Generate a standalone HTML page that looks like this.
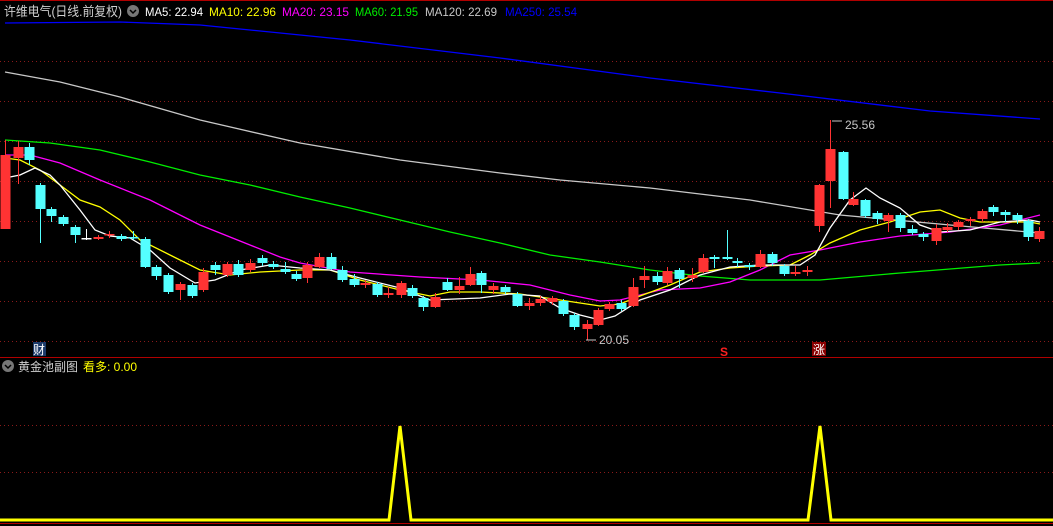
<!DOCTYPE html>
<html><head><meta charset="utf-8"><style>
html,body{margin:0;padding:0;background:#000;width:1053px;height:526px;overflow:hidden}
svg{display:block}
text{font-family:"Liberation Sans","Noto Sans CJK SC",sans-serif}
</style></head><body>
<svg width="1053" height="526" viewBox="0 0 1053 526" xmlns="http://www.w3.org/2000/svg">
<rect width="1053" height="526" fill="#000"/>
<line x1="0" y1="0.5" x2="1053" y2="0.5" stroke="#b00000"/>
<g stroke="#8a1a1a" stroke-dasharray="1,3">
<line x1="0" y1="61.5" x2="1053" y2="61.5"/><line x1="0" y1="101.5" x2="1053" y2="101.5"/>
<line x1="0" y1="141.5" x2="1053" y2="141.5"/><line x1="0" y1="181.5" x2="1053" y2="181.5"/>
<line x1="0" y1="221.5" x2="1053" y2="221.5"/><line x1="0" y1="261.5" x2="1053" y2="261.5"/>
<line x1="0" y1="301.5" x2="1053" y2="301.5"/><line x1="0" y1="341.5" x2="1053" y2="341.5"/>
<line x1="0" y1="425.5" x2="1053" y2="425.5"/><line x1="0" y1="472.5" x2="1053" y2="472.5"/>
</g>
<line x1="0" y1="357.5" x2="1053" y2="357.5" stroke="#b00000"/>
<line x1="0" y1="523.5" x2="1053" y2="523.5" stroke="#b00000"/>
<g fill="none" stroke-width="1.3">
<polyline stroke="#0000ff" points="5,23 120,22 200,25 350,40 500,58 650,78 780,93 930,111 1040,119"/>
<polyline stroke="#c8c8c8" points="5,72 60,82 120,97 200,120 300,143 400,160 500,173 560,180 650,188 750,200 840,215 950,225 1040,233"/>
<polyline stroke="#00ee00" points="5,140 50,143 100,150 150,162 200,175 250,185 300,197 350,208 400,220 450,232 500,243 550,255 600,262 650,270 700,276 750,280 820,280 900,273 1000,265 1040,263"/>
<polyline stroke="#ff00ff" points="5,155 30,155 60,163 100,180 150,200 200,225 250,245 280,257 300,263 350,272 420,277 480,280 530,285 570,295 600,301 620,300 660,290 700,288 730,282 760,270 790,255 820,250 860,242 900,236 950,232 1000,225 1040,215"/>
<polyline stroke="#ffff00" points="5,158 20,160 40,170 60,185 80,200 100,207 120,220 140,240 170,255 200,270 230,275 260,272 300,270 330,270 360,280 400,290 430,296 450,292 480,292 520,294 560,300 600,306 620,304 640,296 670,285 700,272 730,268 760,266 790,265 810,255 830,243 860,230 890,222 920,212 940,210 960,218 980,222 1000,222 1030,222 1040,224"/>
<polyline stroke="#ffffff" points="5,178 20,175 35,168 50,175 60,185 80,210 95,230 110,236 130,238 150,250 170,268 195,283 215,280 240,270 270,265 300,268 330,270 360,278 400,288 430,300 480,298 510,294 540,296 560,308 580,315 600,320 615,316 640,300 670,290 700,275 730,267 760,265 800,265 815,255 830,228 850,200 866,188 880,198 900,208 920,225 940,232 970,230 1000,222 1030,220 1040,222"/>
</g>
<g id="c"></g>
<text x="4" y="16" fill="#d0d0d0" font-size="13" textLength="118" lengthAdjust="spacingAndGlyphs">许维电气(日线.前复权)</text>
<circle cx="133" cy="11" r="6" fill="#777"/><path d="M130,10 l3,3 l3,-3" stroke="#000" stroke-width="1.5" fill="none"/>
<g font-size="12">
<text x="145" y="16" fill="#fff" textLength="58" lengthAdjust="spacingAndGlyphs">MA5: 22.94</text>
<text x="209" y="16" fill="#ffff00" textLength="67" lengthAdjust="spacingAndGlyphs">MA10: 22.96</text>
<text x="282" y="16" fill="#ff00ff" textLength="67" lengthAdjust="spacingAndGlyphs">MA20: 23.15</text>
<text x="355" y="16" fill="#00ee00" textLength="63" lengthAdjust="spacingAndGlyphs">MA60: 21.95</text>
<text x="425" y="16" fill="#c8c8c8" textLength="72" lengthAdjust="spacingAndGlyphs">MA120: 22.69</text>
<text x="505" y="16" fill="#0000ff" textLength="72" lengthAdjust="spacingAndGlyphs">MA250: 25.54</text>
</g>
<rect x="33" y="342" width="13" height="14" fill="#1c3a6a"/>
<text x="33" y="354" fill="#fff" font-size="12">财</text>
<text x="720" y="356" fill="#ff2020" font-size="12" font-weight="bold">S</text>
<rect x="812" y="342" width="14" height="14" fill="#8a0000"/>
<text x="813" y="354" fill="#fff" font-size="12">涨</text>
<text x="845" y="129" fill="#c8c8c8" font-size="12">25.56</text>
<path d="M832,121 h10" stroke="#c8c8c8"/>
<text x="599" y="344" fill="#c8c8c8" font-size="12">20.05</text>
<path d="M586,340 h10" stroke="#c8c8c8"/>
<circle cx="8" cy="366" r="6" fill="#777"/><path d="M5,365 l3,3 l3,-3" stroke="#000" stroke-width="1.5" fill="none"/>
<text x="18" y="371" fill="#d0d0d0" font-size="12">黄金池副图</text>
<text x="83" y="371" fill="#ffff00" font-size="12">看多: 0.00</text>
<polyline fill="none" stroke="#ffff00" stroke-width="3" points="0,520 389,520 400,426 411,520 808,520 820,426 831,520 1053,520"/>
</svg>
<script>
var C=[[5,155,229,140,229,'r'],[18,147,158,141,184,'r'],[29,147,160,143,165,'c'],[40,185,209,183,243,'c'],[51,209,216,207,222,'c'],[63,217,224,215,226,'c'],[75,227,235,225,243,'c'],[86,238,239,229,240,'w'],[98,237,239,235,240,'r'],[109,234,235,231,238,'r'],[121,236,239,234,241,'c'],[133,237,238,231,240,'c'],[145,239,267,237,268,'c'],[156,267,276,265,280,'c'],[168,275,292,273,294,'c'],[180,284,290,282,300,'r'],[192,285,296,283,298,'c'],[203,272,290,268,292,'r'],[215,265,270,262,275,'c'],[227,264,275,262,277,'r'],[238,264,275,260,277,'c'],[250,263,270,259,272,'r'],[262,258,263,255,266,'c'],[273,264,267,261,269,'c'],[285,269,272,262,274,'c'],[296,274,279,271,281,'c'],[307,265,278,262,283,'r'],[319,257,267,253,268,'r'],[331,257,269,253,270,'c'],[342,270,280,266,282,'c'],[354,279,285,274,287,'c'],[365,283,285,280,288,'r'],[377,284,295,282,297,'c'],[388,293,295,287,298,'r'],[401,283,295,281,298,'r'],[412,288,296,285,298,'c'],[423,298,307,296,311,'c'],[435,297,307,293,308,'r'],[447,282,290,278,291,'c'],[459,286,290,277,294,'r'],[470,274,285,267,286,'r'],[481,273,285,271,293,'c'],[493,286,290,283,294,'r'],[505,287,292,285,294,'c'],[517,294,306,292,307,'c'],[529,303,306,298,310,'r'],[540,299,303,296,306,'r'],[552,298,302,296,305,'r'],[563,301,314,299,316,'c'],[574,315,327,313,330,'c'],[587,324,329,320,340,'r'],[598,310,325,308,326,'r'],[609,304,309,302,311,'r'],[621,303,309,300,311,'c'],[633,287,306,278,307,'r'],[644,276,280,266,288,'r'],[657,276,282,272,285,'c'],[667,271,283,267,285,'r'],[679,270,279,268,288,'c'],[692,275,278,268,282,'r'],[703,258,272,254,273,'r'],[714,257,259,255,268,'c'],[727,257,259,230,260,'c'],[737,261,263,258,267,'c'],[749,265,267,263,270,'c'],[760,254,267,250,268,'r'],[772,254,263,252,266,'c'],[784,266,274,264,276,'c'],[795,272,274,266,276,'r'],[807,270,272,266,276,'r'],[819,185,226,184,232,'r'],[830,149,181,120,208,'r'],[843,152,199,151,200,'c'],[853,199,205,192,206,'r'],[865,200,216,199,218,'c'],[877,213,219,211,224,'c'],[888,215,221,213,232,'r'],[900,215,228,213,232,'c'],[912,229,233,225,235,'c'],[923,234,237,232,241,'c'],[936,228,241,224,245,'r'],[947,227,230,223,232,'r'],[958,222,227,220,230,'r'],[970,219,221,217,226,'r'],[982,211,219,209,222,'r'],[993,207,212,205,216,'c'],[1005,212,215,210,222,'c'],[1017,215,220,213,224,'c'],[1028,221,237,219,241,'c'],[1039,231,239,227,242,'r']];
var g=document.getElementById('c'),s='';
C.forEach(function(a){var col=a[5]=='r'?'#ff3333':(a[5]=='c'?'#54ffff':'#ffffff');
s+='<line x1="'+a[0]+'.5" x2="'+a[0]+'.5" y1="'+a[3]+'" y2="'+a[4]+'" stroke="'+col+'"/>';
var h=Math.max(a[2]-a[1],1.5);s+='<rect x="'+(a[0]-4.5)+'" y="'+a[1]+'" width="10" height="'+h+'" fill="'+col+'"/>';});
g.innerHTML=s;
</script>
</body></html>
